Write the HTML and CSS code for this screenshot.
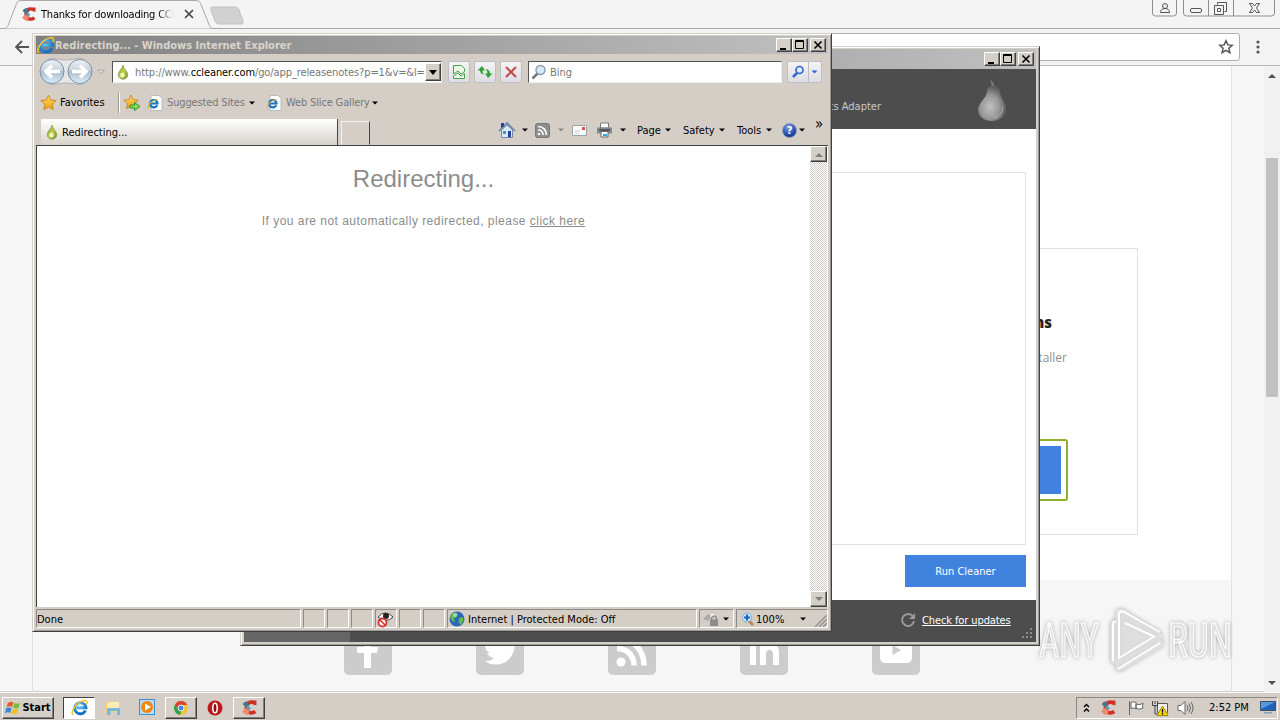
FILE: index.html
```html
<!DOCTYPE html>
<html lang="en">
  <head>
    <meta charset="UTF-8" />
    <meta name="viewport" content="width=device-width, initial-scale=1.0" />
    <title>Desktop</title>
    <link rel="stylesheet" href="styles.css">
  </head>
  <body>
    <!-- Shared icons -->
    <svg class="defs" width="0" height="0">
      <defs>
        <radialGradient id="blueBall" cx="40%" cy="30%" r="75%">
          <stop offset="0" stop-color="#6fd0fa" /><stop offset="1" stop-color="#0f6cc4" />
        </radialGradient>
        <linearGradient id="star" x1="0" y1="0" x2="0" y2="1">
          <stop offset="0" stop-color="#ffe36b" /><stop offset="1" stop-color="#f09a10" />
        </linearGradient>
        <linearGradient id="nav" x1="0" y1="0" x2="0" y2="1">
          <stop offset="0" stop-color="#eef2f6" /><stop offset="0.45" stop-color="#c9d3de" /><stop offset="0.5" stop-color="#abbccc" /><stop offset="1" stop-color="#daf0fa" />
        </linearGradient>
        <radialGradient id="pear" cx="42%" cy="60%" r="58%">
          <stop offset="0" stop-color="#c2c2c2" /><stop offset="0.6" stop-color="#969696" /><stop offset="1" stop-color="#5c5c5c" />
        </radialGradient>
        <linearGradient id="drop" x1="0" y1="0" x2="1" y2="1">
          <stop offset="0" stop-color="#7d9433" /><stop offset="0.5" stop-color="#b9d04f" /><stop offset="1" stop-color="#6d8c22" />
        </linearGradient>
      </defs>
      <symbol id="i-ie" viewBox="0 0 16 16">
        <path d="M13.600 10.800A5.200 5.200 0 1 1 14 8.300H5.500" fill="none" stroke="url(#blueBall)" stroke-width="2.800" />
        <path d="M2 15C-.4 13 3 6 8 3.200c3.500-2 6.500-2.300 7-.8.300.7 0 1.800-.5 2.800" fill="none" stroke="#f0c132" stroke-width="1.400" />
      </symbol>
      <symbol id="i-iepage" viewBox="0 0 16 16">
        <path d="M4 .5h8l3 3v12H4z" fill="#fff" stroke="#b5bcc4" />
        <path d="M10.200 10.200A3.700 3.700 0 1 1 10.500 8.500H4" fill="none" stroke="#1977c2" stroke-width="2.200" />
        <path d="M1.500 13.500C0 11 4 5.500 10.500 4.500" fill="none" stroke="#e8b52d" stroke-width="1.200" />
      </symbol>
      <symbol id="i-drop" viewBox="0 0 12 16">
        <path d="M6 1C6.500 5 10.800 7 10.800 10.800A4.800 4.500 0 0 1 1.200 10.800C1.200 7 5.500 5 6 1z" fill="url(#drop)" stroke="#879b45" stroke-width=".7" />
        <ellipse cx="5.500" cy="11" rx="2.300" ry="2.500" fill="#edf5bc" />
      </symbol>
      <symbol id="i-cc" viewBox="0 0 16 16">
        <path d="M13.500 4.200Q11 2.500 8.500 3 5 4 5 8t3.500 5q2.500.5 5-1.200" fill="none" stroke="#cf3127" stroke-width="3.400" />
        <path d="M11.500 1.500h3V6l-3-1z" fill="#cf3127" />
        <path d="M1.500 5q1-2.500 4-3l2.500 4L5.500 8z" fill="#41788f" />
        <path d="M5.500 6l4 2.500-2 2L5 8.500z" fill="#5b9db8" />
        <path d="M1 11.500l3.500-3L8 11l-1 4q-3 .5-6-3.500z" fill="#ee8a70" />
      </symbol>
      <symbol id="i-star" viewBox="0 0 16 16">
        <path d="M8 1l2.100 4.700 5.100.5-3.800 3.500 1.100 5L8 12.200 3.500 14.700l1.100-5L.8 6.200l5.100-.5z" fill="url(#star)" stroke="#c98716" stroke-width=".9" />
      </symbol>
      <symbol id="i-arrow" viewBox="0 0 6 4"><path d="M0 .5h6L3 3.500z" fill="currentColor" /></symbol>
      <symbol id="i-min" viewBox="0 0 14 12"><path d="M3 9h6v2H3z" fill="#000" /></symbol>
      <symbol id="i-max" viewBox="0 0 14 12"><path d="M2.500 1.500h8v8h-8zM2 2.500h9" fill="none" stroke="#000" /></symbol>
      <symbol id="i-close" viewBox="0 0 14 12"><path d="M3.500 2.500l7 7m0-7l-7 7" fill="none" stroke="#000" stroke-width="1.600" /></symbol>
    </svg>

    <div class="desktop">
      <!-- Chrome -->
      <section class="chrome">
        <header class="tabstrip">
          <svg class="tab-shape" width="250" height="30" viewBox="0 0 250 30">
            <path d="M0 28.500h4c2 0 3-1 4-3L16 5C17 2 18 .5 21 .5h175c3 0 4 1.500 5 4l8 20c1 3 2 4 5 4h36" fill="#f4f4f4" stroke="#a9a9a9" />
            <path d="M212 7h23c2 0 3 1 4 3l4 11c.5 2 0 3-2 3h-22c-2 0-3-1-4-3l-4-11c-.5-2 0-3 1-3z" fill="#d1d1d1" stroke="#c0c0c0" />
          </svg>
          <div class="chrome-tab">
            <svg width="16" height="16"><use href="#i-cc" /></svg>
            <span class="chrome-title">Thanks for downloading CCl</span>
            <svg width="10" height="10" viewBox="0 0 10 10"><path d="M1 1l8 8M9 1L1 9" stroke="#444" stroke-width="1.700" /></svg>
          </div>
          <svg class="chrome-buttons" width="126" height="18" viewBox="0 0 126 18" fill="none" stroke="#8e8e8e">
            <path d="M.5-1v14q0 3 3 3h18q3 0 3-3V-1M31.500-1v14q0 3 3 3h85q3 0 3-3V-1M56.500 0v16M81.500 0v16" />
            <g stroke="#555">
              <circle cx="13" cy="6" r="2.500" /><path d="M8.500 12.500c0-3 2-4 4.500-4s4.500 1 4.500 4z" />
              <rect x="38.500" y="8.500" width="11" height="4" rx="1.500" />
              <path d="M65.500 4.500v-2h9v9h-2M62.500 5.500h9v9h-9zM65.500 8.500h3v3h-3z" />
              <path d="M97.500 3.500h3l2 2.500 2-2.500h3L104.500 8l3 4.500h-3l-2-2.500-2 2.500h-3l3-4.500z" />
            </g>
          </svg>
        </header>
        <div class="chrome-toolbar">
          <svg width="16" height="14" viewBox="0 0 16 14" fill="none" stroke="#555" stroke-width="1.800"><path d="M8 1L2 7l6 6M2 7h13" /></svg>
          <div class="omnibox">
            <svg width="16" height="16" viewBox="0 0 16 16"><path d="M8 1.800l1.800 4.100 4.400.4-3.300 3 1 4.400L8 11.400l-3.900 2.300 1-4.400-3.300-3 4.400-.4z" fill="none" stroke="#555" stroke-width="1.500" /></svg>
          </div>
          <svg width="4" height="14" viewBox="0 0 4 14" fill="#555"><circle cx="2" cy="2" r="1.600" /><circle cx="2" cy="7" r="1.600" /><circle cx="2" cy="12" r="1.600" /></svg>
        </div>
        <div class="viewport">
          <div class="page">
            <div class="page-main">
              <div class="option-card">
                <h3>Other versions</h3>
                <p>Get the installer</p>
                <div class="focus-ring"><div class="download"></div></div>
              </div>
            </div>
            <footer class="social">
              <svg width="48" height="48" viewBox="0 0 48 48"><rect width="48" height="48" rx="5" fill="#ccc" /><path d="M20 41V26h-7v-6h7v-7c0-5 3-7 7-7h6v6h-4c-2 0-2 1-2 2v6h7l-1 6h-6v15z" fill="#fff" /></svg>
              <svg width="48" height="48" viewBox="0 0 48 48"><rect width="48" height="48" rx="5" fill="#ccc" /><path d="M9 34c5 0 7-1 9-3-4-.5-6-3-7-5h3c-4-2-5-5-5-8l3 1c-3-3-3-7-1-10 4 5 9 7 14 8-1-6 2-9 6-9 3 0 4 1 6 2l4-2-2 4 3-.5-3 4c0 13-8 22-19 22-5 0-8-1-11-3.500z" fill="#fff" /></svg>
              <svg width="48" height="48" viewBox="0 0 48 48"><rect width="48" height="48" rx="5" fill="#ccc" /><circle cx="13" cy="35" r="4.500" fill="#fff" /><path d="M9 21.500c10 0 17 7 17 17M9 11.500c16 0 27 11 27 27" fill="none" stroke="#fff" stroke-width="5.500" /></svg>
              <svg width="48" height="48" viewBox="0 0 48 48"><rect width="48" height="48" rx="5" fill="#ccc" /><path d="M10 17h6v21h-6zM20 17h6v3c3-5 13-5 13 5v13h-6V27c0-6-7-5-7 0v11h-6z" fill="#fff" /><circle cx="13" cy="10" r="3.500" fill="#fff" /></svg>
              <svg width="48" height="48" viewBox="0 0 48 48"><rect width="48" height="48" rx="5" fill="#ccc" /><rect x="8" y="12" width="32" height="24" rx="5" fill="#fff" /><path d="M20.500 18l8.500 5-8.500 5z" fill="#ccc" /></svg>
            </footer>
          </div>
          <div class="chrome-scroll">
            <svg width="8" height="4" viewBox="0 0 8 4"><path d="M0 4l4-4 4 4z" fill="#505050" /></svg>
            <div class="thumb"></div>
            <svg width="8" height="4" viewBox="0 0 8 4"><path d="M0 0l4 4 4-4z" fill="#505050" /></svg>
          </div>
        </div>
      </section>

      <!-- Sandbox watermark -->
      <svg class="watermark" width="204" height="70" viewBox="0 0 204 70">
        <g fill="#ececec" fill-opacity=".7" stroke="#fff" stroke-width="1.200">
          <text x="3" y="51" textLength="60" lengthAdjust="spacingAndGlyphs">ANY</text>
          <text x="132" y="51" textLength="64" lengthAdjust="spacingAndGlyphs">RUN</text>
          <path d="M80 15q-5-2-5 3v36q0 4 5 3v5q1 4 6 2l40-24q3-2 0-5l-2-2q5-3 0-6L88 4q-7-3-8 3z" stroke-width="1" stroke="#e0e0e0" />
          <path d="M80 16q-3-1-3 2v37M83 22V8q1-4 5-2l36 20M83 13v39l36-22M83 7M82 63l42-26M89 17l30 14" fill="none" stroke-width="2" />
        </g>
      </svg>

      <!-- CCleaner -->
      <section class="window cc-window">
        <div class="titlebar">
          <div class="win-buttons">
            <span class="btn3d"><svg width="14" height="12"><use href="#i-min" /></svg></span>
            <span class="btn3d"><svg width="14" height="12"><use href="#i-max" /></svg></span>
            <span class="btn3d close"><svg width="14" height="12"><use href="#i-close" /></svg></span>
          </div>
        </div>
        <div class="cc-header">
          <span>Graphics Adapter</span>
          <svg width="32" height="46" viewBox="0 0 32 46">
            <path d="M15.500 9q.5-4-1.500-7.500Q18 4 18.500 9" fill="#7d7d7d" />
            <path d="M11 13c0-7 12-7 13 0 .3 4 1 6 3 9 7 10 1 21-11.500 21S-2 32 6 23c3-4 5-6 5-10z" fill="url(#pear)" />
            <path d="M26.500 29q1 8-9 11" fill="none" stroke="#b0b0b0" />
          </svg>
        </div>
        <div class="cc-body">
          <div class="results"></div>
          <button class="run">Run Cleaner</button>
        </div>
        <div class="cc-footer">
          <div class="cc-nav"></div>
          <svg width="16" height="16" viewBox="0 0 16 16"><path d="M13 4.500A6 6 0 1 0 14 9" fill="none" stroke="#999" stroke-width="2" /><path d="M15 1v6H9z" fill="#999" /></svg>
          <a>Check for updates</a>
          <svg class="grip" width="12" height="12" viewBox="0 0 12 12" fill="#8a8a8a"><path d="M9 0h2v2H9zM5 4h2v2H5zM9 4h2v2H9zM1 8h2v2H1zM5 8h2v2H5zM9 8h2v2H9z" /></svg>
        </div>
      </section>

      <!-- Internet Explorer -->
      <section class="window ie-window">
        <div class="titlebar">
          <svg width="19" height="18"><use href="#i-ie" /></svg>
          <span class="title">Redirecting... - Windows Internet Explorer</span>
          <div class="win-buttons">
            <span class="btn3d"><svg width="14" height="12"><use href="#i-min" /></svg></span>
            <span class="btn3d"><svg width="14" height="12"><use href="#i-max" /></svg></span>
            <span class="btn3d close"><svg width="14" height="12"><use href="#i-close" /></svg></span>
          </div>
        </div>

        <div class="ie-nav">
          <svg width="58" height="30" viewBox="0 0 58 30">
            <path d="M15 1q13 4 28 0a14 14 0 0 1 0 27q-14-4-28 0A14 14 0 0 1 15 1z" fill="#e6e6e8" stroke="#b4b2b2" />
            <g fill="url(#nav)" stroke="#7b8fa3"><circle cx="15" cy="14.500" r="12" /><circle cx="43" cy="14.500" r="12" /></g>
            <g fill="none" stroke="#fff" stroke-width="3.500"><path d="M15 8.500L9 14.500l6 6M9.500 14.500H23M43 8.500l6 6-6 6M48.500 14.500H35" /></g>
          </svg>
          <svg class="nav-drop" width="8" height="6" viewBox="0 0 8 6"><path d="M.5 1h7L4 5z" fill="#ddd" stroke="#aaa" /></svg>
          <div class="field address">
            <svg width="12" height="16"><use href="#i-drop" /></svg>
            <span class="url">http://www.<b>ccleaner.com</b>/go/app_releasenotes?p=1&amp;v=&amp;l=</span>
            <span class="btn3d drop"><svg width="8" height="5" viewBox="0 0 8 5"><path d="M0 0h8L4 5z" /></svg></span>
          </div>
          <span class="tool"><svg width="14" height="16" viewBox="0 0 14 16" fill="none"><path d="M1.500 1.500h8l3 3v3L9 10 6 7l-4.500 3zM1.500 12L6 9l3 3 3.500-2.500v5h-11z" fill="#e9f7e4" stroke="#49a04c" /></svg></span>
          <span class="tool"><svg width="16" height="14" viewBox="0 0 16 14" fill="#31a035"><path d="M5 1L.5 5.500H3q0 3.500 4 4-1.500-1.500-1.500-4H8zM11 13l4.500-4.500H13q0-4-4.500-4.500 2 1.500 2 4.500H8z" /></svg></span>
          <span class="tool"><svg width="14" height="14" viewBox="0 0 14 14"><path d="M2 2l10 10M12 2L2 12" stroke="#c4484b" stroke-width="2" /></svg></span>
          <div class="field search">
            <svg width="16" height="16" viewBox="0 0 16 16" fill="none"><path d="M1.500 14.500l5-5" stroke="#777" stroke-width="2.500" /><circle cx="9.500" cy="6" r="4.500" fill="#d6eafa" stroke="#8a9aa8" stroke-width="1.400" /></svg>
            <span>Bing</span>
          </div>
          <div class="go">
            <svg width="14" height="14" viewBox="0 0 14 14" fill="none" stroke="#2f68cc"><circle cx="8.500" cy="5" r="3.500" stroke-width="1.700" /><path d="M2 12l4-4" stroke-width="2.500" /></svg>
            <i></i>
            <svg class="blue" width="7" height="4"><use href="#i-arrow" /></svg>
          </div>
        </div>

        <div class="ie-favorites">
          <svg width="17" height="17"><use href="#i-star" /></svg>
          <span class="dark">Favorites</span>
          <i></i>
          <svg width="19" height="17" viewBox="0 0 19 17"><svg width="16" height="16"><use href="#i-star" /></svg><path d="M7 11h4.500V8.500l5.500 4-5.500 4V14H7z" fill="#7ddd5a" stroke="#348f24" /></svg>
          <svg width="16" height="16"><use href="#i-iepage" /></svg>
          <span class="suggested">Suggested Sites</span>
          <svg width="6" height="4"><use href="#i-arrow" /></svg>
          <svg width="16" height="16"><use href="#i-iepage" /></svg>
          <span class="slice">Web Slice Gallery</span>
          <svg width="6" height="4"><use href="#i-arrow" /></svg>
        </div>

        <div class="ie-tabs">
          <div class="ie-tab">
            <svg width="12" height="16"><use href="#i-drop" /></svg>
            <span>Redirecting...</span>
          </div>
          <div class="ie-newtab"></div>
          <div class="commands">
            <svg width="18" height="18" viewBox="0 0 18 18"><path d="M3.500 9v7.500h11V9L9 4z" fill="#d8eafa" stroke="#7089a5" /><path d="M1 10l8-8 8 8" fill="none" stroke="#6688aa" stroke-width="1.600" /><path d="M3 2h3v3L3 7zM10 10h3v6h-3z" fill="#2440a0" /><path d="M5 10h3v3H5z" fill="#4f8fc8" /></svg>
            <svg class="arr" width="6" height="4"><use href="#i-arrow" /></svg>
            <svg width="15" height="15" viewBox="0 0 15 15" fill="none"><rect x=".5" y=".5" width="14" height="14" rx="2" fill="#8d8d8d" stroke="#777" /><path d="M3 7c3 0 5 2 5 5M3 3.500c5 0 8.500 3.500 8.500 8.500" stroke="#fff" stroke-width="1.700" /><circle cx="4" cy="11" r="1.300" fill="#fff" /></svg>
            <svg class="arr dim" width="6" height="4"><use href="#i-arrow" /></svg>
            <svg width="15" height="11" viewBox="0 0 15 11"><path d="M.5.5h14v10H.5z" fill="#fafafa" stroke="#9da3aa" /><path d="M10 2h3v3h-3z" fill="#d0524e" /><path d="M3 6h5M3 8h4" stroke="#ccc" /></svg>
            <svg width="18" height="16" viewBox="0 0 18 16"><path d="M4.500 1h8v5h-8z" fill="#fff" stroke="#777" /><path d="M1 5.500h15v6H1z" fill="#858a90" /><path d="M3 8h11" stroke="#444" stroke-width="1.500" /><path d="M5 9.500h7v5.500H5z" fill="#fff" stroke="#666" /><path d="M7 13h4" stroke="#3aa0d8" stroke-width="2" /></svg>
            <svg class="arr" width="6" height="4"><use href="#i-arrow" /></svg>
            <span>Page</span><svg class="arr" width="6" height="4"><use href="#i-arrow" /></svg>
            <span>Safety</span><svg class="arr" width="6" height="4"><use href="#i-arrow" /></svg>
            <span>Tools</span><svg class="arr" width="6" height="4"><use href="#i-arrow" /></svg>
            <span class="help">?</span><svg class="arr" width="6" height="4"><use href="#i-arrow" /></svg>
            <span class="more">»</span>
          </div>
        </div>

        <div class="ie-content">
          <div class="ie-page">
            <h1>Redirecting...</h1>
            <p>If you are not automatically redirected, please <a>click here</a></p>
          </div>
          <div class="ie-scroll">
            <span class="btn3d"><svg width="8" height="5"><path d="M0 5l4-4 4 4z" fill="#808080" /></svg></span>
            <span class="btn3d"><svg width="8" height="5"><path d="M0 0l4 4 4-4z" fill="#808080" /></svg></span>
          </div>
        </div>

        <div class="ie-status">
          <span class="panel">Done</span>
          <span class="panel"></span>
          <span class="panel"></span>
          <span class="panel"></span>
          <span class="panel"><svg width="19" height="17" viewBox="0 0 19 17"><path d="M2 6q7-8 15 0-7 7-15 0z" fill="#fff" stroke="#444" /><circle cx="10" cy="5" r="3" fill="#222" /><circle cx="6.500" cy="11.500" r="4" fill="#fff" stroke="#d0322e" stroke-width="1.800" /><path d="M4 9l5 5" stroke="#d0322e" stroke-width="1.600" /></svg></span>
          <span class="panel"></span>
          <span class="panel"></span>
          <span class="panel zone">
            <svg width="16" height="16" viewBox="0 0 16 16"><circle cx="8" cy="8" r="7.500" fill="#2867bd" /><path d="M3 3q4-3 6 0-1 4-4 4l1 4-3-1-2-4zM10 7l4-1 .5 4-3 4-2-3z" fill="#60bd45" /><circle cx="6" cy="4" r="2" fill="#c9ecff" opacity=".6" /></svg>
            Internet | Protected Mode: Off
          </span>
          <span class="panel lock">
            <svg width="18" height="16" viewBox="0 0 18 16"><path d="M1 8l5-5 3 3-3 4z" fill="#aaa" /><path d="M8 2h4l3 5H9z" fill="#fff" stroke="#bbb" /><path d="M9.500 9V7q2.500-4 5 0v2" fill="none" stroke="#888" stroke-width="1.300" /><path d="M8 8.500h8V15H8z" fill="#8c8c8c" /></svg>
            <svg width="6" height="4"><use href="#i-arrow" /></svg>
          </span>
          <span class="panel zoom">
            <svg width="15" height="15" viewBox="0 0 15 15" fill="none"><path d="M8 9l4 4" stroke="#bd8148" stroke-width="2.500" /><circle cx="6" cy="5.500" r="4.500" fill="#d4ebff" stroke="#7ba8d8" /><path d="M6 2.500v6M3 5.500h6" stroke="#1c5fc0" stroke-width="2" /></svg>
            <b>100%</b>
            <svg width="6" height="4"><use href="#i-arrow" /></svg>
            <svg class="grip" width="12" height="12" viewBox="0 0 12 12" fill="none"><path d="M0 12L12 0M4 12l8-8M8 12l4-4" stroke="#908c86" stroke-width="1.300" /></svg>
          </span>
        </div>
      </section>

      <!-- Taskbar -->
      <footer class="taskbar">
        <span class="btn3d start">
          <svg width="16" height="16" viewBox="0 0 16 16"><path d="M3 3q3-2 5.500-.5L7 7Q4.500 5.500 1.500 7z" fill="#e8592b" /><path d="M9.500 3q3 1.500 5.500 0L13.500 8Q11 9 8 7.500z" fill="#7cb93b" /><path d="M1.200 8Q4 6.800 6.700 8L5.300 12.800Q3 11.500 0 13z" fill="#3c83d2" /><path d="M7.800 8.800q3 1.500 5.500 0L12 13.500Q9 15 6.300 13.500z" fill="#f4bd2c" /></svg>
          Start
        </span>
        <span class="task active"><svg width="17" height="17"><use href="#i-ie" /></svg></span>
        <span class="task"><svg width="17" height="17" viewBox="0 0 17 17"><path d="M1 3h6l1 1.500h7V13H1z" fill="#f3d774" /><path d="M2 5l3-2h9v7H2z" fill="#fbedb0" /><path d="M2 9h13v7h-3v-4H5.500v4H2z" fill="#75b9e2" /></svg></span>
        <span class="task"><svg width="17" height="17" viewBox="0 0 17 17"><rect x=".5" y=".5" width="15" height="15" fill="#b9dcf5" stroke="#3a8fd0" /><circle cx="8" cy="8" r="6" fill="#f08713" /><path d="M6 4.500l6 3.500-6 3.500z" fill="#fff" /></svg></span>
        <span class="task btn3d"><svg width="16" height="16" viewBox="0 0 16 16"><circle cx="8" cy="8" r="7" fill="#f2c52e" /><path d="M2 4.500A7 7 0 0 1 14.300 5H8L5 9.500z" fill="#da4436" /><path d="M2 4.500l3.500 5.500L8.500 11 7 15A7 7 0 0 1 2 4.500z" fill="#2da150" /><circle cx="8" cy="8" r="3" fill="#4885e8" stroke="#eee" stroke-width="1" /></svg></span>
        <span class="task"><svg width="16" height="16" viewBox="0 0 16 16"><circle cx="8" cy="8" r="7.500" fill="#bf1720" /><ellipse cx="8" cy="8" rx="2.200" ry="4.800" fill="#8e0d14" stroke="#fff" stroke-width="1.600" /></svg></span>
        <span class="task btn3d"><svg width="17" height="17"><use href="#i-cc" /></svg></span>
        <div class="tray">
          <svg width="7" height="10" viewBox="0 0 7 10" fill="none" stroke="#000" stroke-width="1.400"><path d="M1 4l2.500-2.500L6 4M1 8.500L3.500 6 6 8.500" /></svg>
          <svg width="17" height="17"><use href="#i-cc" /></svg>
          <svg width="17" height="16" viewBox="0 0 17 16" fill="#fff" stroke="#666"><path d="M1.500 1v14M3 2.500q3-1.500 5 0v6q-3-1-5 0zM8 4q4 2 7-1-1 4 0 5-3 2-7 .5z" /></svg>
          <svg width="17" height="16" viewBox="0 0 17 16"><path d="M5.500 3.500h10v9h-10z" fill="#eee" stroke="#555" /><path d="M.5 1v4.500h5V1M3 1v3M3 5.500V14h4" fill="none" stroke="#444" /><path d="M10.500 6l5.500 9.500H5z" fill="#f5d90a" stroke="#a88a00" /><path d="M10.500 9v3.500M10.500 13v1.500" stroke="#000" stroke-width="1.300" /></svg>
          <svg width="17" height="16" viewBox="0 0 17 16" fill="none" stroke="#666"><path d="M1 5.500h3l4-4v13l-4-4H1z" fill="#fff" /><path d="M10 5q2 3 0 6M12 3.500q3 4.500 0 9M14 2q4 6 0 12" /></svg>
          <span class="clock">2:52 PM</span>
          <svg width="16" height="13" viewBox="0 0 16 13"><path d="M.5.500h15v9H.5z" fill="#1d62bd" stroke="#3d4f68" /><path d="M1 1h14L1 8z" fill="#559ade" /><path d="M4 11h8v1.500H4z" fill="#8ca0b4" /></svg>
        </div>
      </footer>
    </div>
  </body>
</html>
```
FILE: styles.css
```css
* {
  margin: 0;
  padding: 0;
  box-sizing: border-box;
}

body {
  font-family: 'DejaVu Sans Condensed', 'DejaVu Sans', sans-serif;
  font-stretch: condensed;
  font-size: 11px;
  color: #000;
  overflow: hidden;
}

svg {
  display: block;
  flex: none;
}

.defs {
  position: absolute;
}

.desktop {
  position: relative;
  width: 1280px;
  height: 720px;
  overflow: hidden;
  white-space: nowrap;
}

/* Chrome */
.chrome {
  height: 692px;
  background: #f6f6f6;
  display: flex;
  flex-direction: column;
}

.tabstrip {
  position: relative;
  display: flex;
  justify-content: space-between;
  height: 29px;
  background: #f4f4f4;
  border-bottom: 1px solid #a9a9a9;
}

.tab-shape {
  position: absolute;
  left: 0;
  top: 0;
}

.chrome-tab {
  position: relative;
  display: grid;
  grid-template-columns: 20px 143px 10px;
  align-items: center;
  padding-left: 21px;
}

.chrome-title {
  width: 133px;
  overflow: hidden;
  letter-spacing: -0.2px;
  -webkit-mask-image: linear-gradient(90deg, #000 88%, transparent);
  mask-image: linear-gradient(90deg, #000 88%, transparent);
}

.chrome-buttons {
  margin-right: 2px;
}

.chrome-toolbar {
  display: flex;
  align-items: center;
  height: 37px;
  padding: 0 20px 0 14px;
  background: #f3f3f3;
  border-bottom: 1px solid #b8b8b8;
}

.omnibox {
  display: flex;
  align-items: center;
  justify-content: flex-end;
  flex: 1;
  height: 28px;
  margin: 0 16px 0 20px;
  padding-right: 5px;
  background: #fff;
  border: 1px solid #b0b0b0;
  border-radius: 3px;
}

.viewport {
  display: flex;
  justify-content: space-between;
  flex: 1;
}

.page {
  display: flex;
  flex-direction: column;
  width: 1200px;
  margin-left: 32px;
  border: solid #e3e3e3;
  border-width: 0 1px;
}

.page-main {
  height: 514px;
  padding: 182px 93px 0;
  background: #fff;
}

.option-card {
  width: 300px;
  height: 287px;
  margin-left: auto;
  padding: 63px 69px 0;
  border: 1px solid #e0e0e0;
  font-family: 'Open Sans', sans-serif;
  font-stretch: normal;
  text-align: right;
}

.option-card h3 {
  margin-right: 16px;
  font-size: 15px;
  font-weight: 800;
  line-height: 21px;
  color: #2b241e;
}

.option-card p {
  margin-top: 15px;
  padding-right: 1px;
  font-size: 12px;
  line-height: 20px;
  color: #8f8f8f;
}

.focus-ring {
  height: 62px;
  margin-top: 71px;
  padding: 5px;
  border: 2px solid #8db02e;
  border-radius: 3px;
}

.download {
  height: 48px;
  background: #4381e0;
}

.social {
  display: flex;
  gap: 84px;
  padding: 47px 0 0 311px;
}

.chrome-scroll {
  display: flex;
  flex-direction: column;
  align-items: center;
  justify-content: space-between;
  width: 16px;
  padding: 8px 0 7px;
  background: #f1f1f1;
}

.thumb {
  width: 12px;
  height: 239px;
  margin: 80px 0 auto;
  background: #c1c1c1;
}

.watermark {
  position: absolute;
  left: 1036px;
  top: 606px;
  font-family: Roboto, sans-serif;
  font-size: 48px;
  filter: drop-shadow(0 0 2px rgba(0, 0, 0, 0.35));
}

/* Classic windows */
.window {
  position: absolute;
  padding: 2px 3px;
  background: #d4d0c8;
  border: 1px solid;
  border-color: #d4d0c8 #404040 #404040 #d4d0c8;
  box-shadow: inset 1px 1px #fff, inset -1px -1px #9a9a9a;
}

.titlebar {
  display: flex;
  align-items: center;
  height: 18px;
  padding-right: 2px;
  background: linear-gradient(90deg, #808080, #c0c0c0);
}

.title {
  font-family: 'DejaVu Sans', sans-serif;
  font-stretch: condensed;
  font-weight: 700;
  color: #d8d4cc;
}

.win-buttons {
  display: flex;
  margin-left: auto;
}

.btn3d {
  display: flex;
  align-items: center;
  justify-content: center;
  background: #d4d0c8;
  border: 1px solid;
  border-color: #fff #404040 #404040 #fff;
  box-shadow: inset -1px -1px #808080;
}

.win-buttons .btn3d {
  width: 16px;
  height: 14px;
}

.win-buttons .close {
  margin-left: 2px;
}

.cc-window {
  left: 240px;
  top: 46px;
  width: 800px;
  height: 600px;
}

.cc-window .titlebar {
  height: 20px;
}

.cc-header {
  display: flex;
  align-items: center;
  justify-content: flex-end;
  gap: 95px;
  height: 60px;
  padding-right: 28px;
  background: #4d4d4d;
  color: #c9c9c9;
}

.cc-header svg {
  margin-top: 3px;
}

.cc-header span {
  padding-top: 14px;
}

.cc-body {
  display: flex;
  flex-direction: column;
  align-items: flex-end;
  height: 471px;
  padding: 43px 10px 0;
  background: #fff;
}

.results {
  width: 100%;
  height: 373px;
  margin-bottom: 10px;
  border: 1px solid #dfe0e8;
}

.run {
  width: 121px;
  height: 32px;
  background: #4083df;
  border: 0;
  color: #fff;
  font: inherit;
}

.cc-footer {
  display: flex;
  align-items: center;
  gap: 6px;
  height: 42px;
  padding-right: 3px;
  background: #4d4d4d;
  color: #fff;
}

.cc-nav {
  align-self: stretch;
  width: 106px;
  margin-right: auto;
  background: #666;
}

.cc-footer svg,
.cc-footer a {
  margin-bottom: 2px;
}

.cc-footer a {
  width: 93px;
  letter-spacing: -0.1px;
  text-decoration: underline;
}

.cc-footer .grip {
  align-self: flex-end;
}

/* Internet Explorer */
.ie-window {
  left: 32px;
  top: 33px;
  width: 800px;
  height: 599px;
  background: #d5cec7;
}

.ie-nav {
  display: grid;
  grid-template-columns: 60px 15px 336px 26px 26px 28px 259px 36px;
  align-items: center;
  height: 36px;
  padding-left: 1px;
}

.field {
  display: flex;
  align-items: center;
  height: 22px;
  background: #fff;
  border: 1px solid;
  border-color: #555 #f0eeea #f0eeea #555;
  color: #777;
}

.address {
  width: 330px;
  padding-left: 4px;
}

.url {
  margin-left: 6px;
  letter-spacing: -0.1px;
}

.url b {
  font-weight: 400;
  color: #000;
}

.drop {
  width: 16px;
  height: 18px;
  margin-left: auto;
}

.search {
  width: 254px;
  padding-left: 2px;
  gap: 3px;
}

.tool,
.go {
  display: flex;
  align-items: center;
  justify-content: center;
  width: 22px;
  height: 22px;
  background: linear-gradient(#f4f4f5, #dddde3);
  border: 1px solid #bebec4;
  border-radius: 2px;
}

.go {
  width: 35px;
  justify-content: space-between;
  padding: 0 3px;
}

.go i {
  width: 1px;
  height: 20px;
  background: #bebec4;
}

.blue {
  color: #2763cc;
}

.ie-favorites {
  display: grid;
  grid-template-columns: 20px 58px 5px 24px 20px 82px 17px 20px 86px 16px;
  align-items: center;
  height: 25px;
  margin-bottom: 2px;
  padding-left: 4px;
  color: #000;
}

.ie-favorites i {
  width: 2px;
  height: 20px;
  background: #999;
  border-right: 1px solid #fff;
}

.suggested,
.slice {
  color: #777;
  letter-spacing: -0.15px;
}

.ie-tabs {
  display: flex;
  align-items: flex-end;
  height: 28px;
  padding-left: 5px;
}

.ie-tab {
  display: flex;
  align-items: center;
  gap: 4px;
  width: 297px;
  height: 26px;
  padding-left: 5px;
  background: linear-gradient(#fff, #d8d3ca);
  border-right: 1px solid #444;
}

.ie-newtab {
  width: 29px;
  height: 24px;
  margin-left: 3px;
  border: 1px solid;
  border-color: #f4f2ee #444 transparent #f4f2ee;
}

.commands {
  display: grid;
  grid-template-columns: 24px 13px 23px 14px 24px 24px 17px 28px 18px 36px 18px 29px 16px 17px 16px 12px;
  align-items: center;
  height: 30px;
  margin-left: 128px;
}

.dim {
  color: #888;
}

.help {
  width: 15px;
  height: 15px;
  background: radial-gradient(circle at 40% 25%, #7d9ee0, #173d9e 70%);
  border: 1px solid #8295b8;
  border-radius: 50%;
  color: #fff;
  font-weight: 700;
  line-height: 13px;
  text-align: center;
}

.more {
  font-size: 15px;
  line-height: 12px;
  margin-bottom: 12px;
}

.ie-content {
  display: flex;
  height: 462px;
  border: solid #404040;
  border-width: 1px 0 0 1px;
  background: #fff;
}

.ie-page {
  flex: 1;
  padding-top: 19px;
  font-family: 'Liberation Sans', Arial, sans-serif;
  text-align: center;
  color: #8c8c8c;
}

.ie-page h1 {
  font-size: 24px;
  font-weight: 400;
  line-height: 28px;
}

.ie-page p {
  margin-top: 20px;
  font-size: 12px;
  line-height: 16px;
  letter-spacing: 0.47px;
}

.ie-page a {
  text-decoration: underline;
}

.ie-scroll {
  display: flex;
  flex-direction: column;
  justify-content: space-between;
  width: 17px;
  margin-right: 1px;
  background: repeating-conic-gradient(#fff 0 25%, #d5cec7 0 50%) 0 0 / 2px 2px;
}

.ie-scroll .btn3d {
  height: 16px;
}

.ie-status {
  display: grid;
  grid-template-columns: 265px repeat(6, 22px) 250px 35px 92px;
  gap: 2px;
  padding: 2px 0;
}

.panel {
  display: flex;
  align-items: center;
  height: 19px;
  padding-top: 1px;
  border: 1px solid;
  border-color: #8d8984 #fff #fff #8d8984;
}

.zone {
  padding-left: 1px;
  gap: 3px;
}

.lock {
  padding-left: 2px;
  gap: 3px;
}

.zoom {
  padding-left: 4px;
}

.zoom b {
  width: 44px;
  font-weight: 400;
}

.zoom .grip {
  align-self: flex-end;
  margin-left: auto;
}

/* Taskbar */
.taskbar {
  display: flex;
  align-items: center;
  height: 28px;
  padding: 3px 2px 1px;
  background: #d5cec7;
  border-top: 1px solid #fff;
  box-shadow: 0 -1px #cfcbc5;
}

.start {
  width: 52px;
  height: 22px;
  margin-right: 9px;
  gap: 1px;
  font-weight: 700;
}

.task {
  display: flex;
  align-items: center;
  justify-content: center;
  width: 32px;
  height: 22px;
  margin-right: 2px;
}

.active {
  background: #fff;
  border: 1px solid;
  border-color: #404040 #fff #fff #404040;
}

.tray {
  display: grid;
  grid-template-columns: 17px 28px 24px 25px 32px 51px 16px;
  align-items: center;
  width: 202px;
  height: 22px;
  margin-left: auto;
  padding-left: 6px;
  border: 1px solid;
  border-color: #8d8984 #fff #fff #8d8984;
}
```
